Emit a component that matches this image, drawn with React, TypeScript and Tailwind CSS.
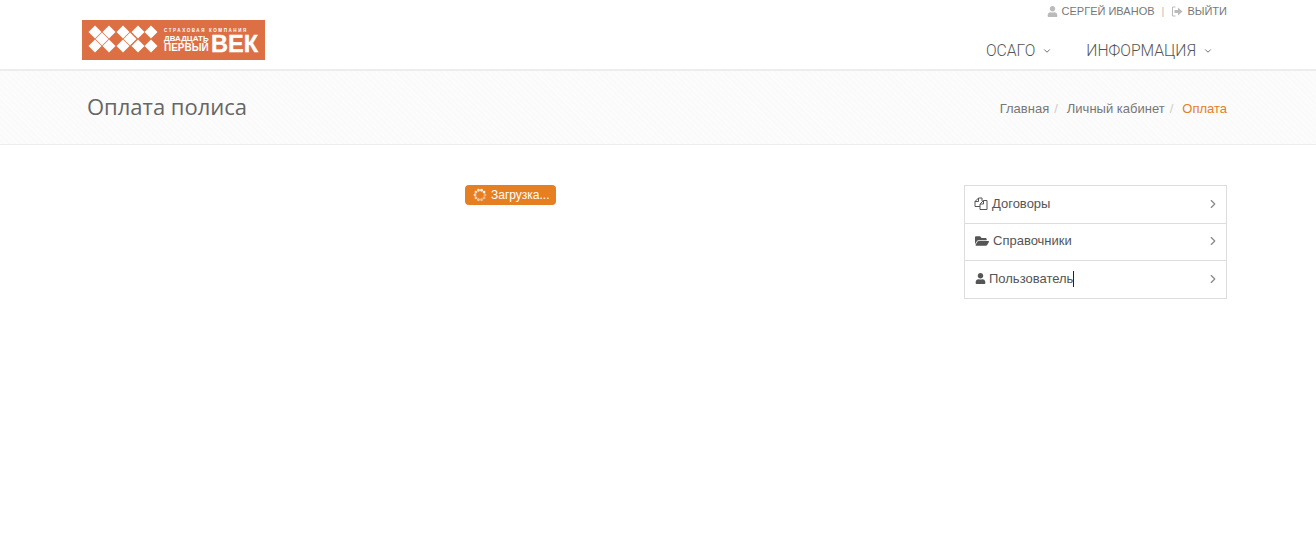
import { FaFolderOpen, FaUser } from "react-icons/fa";
import { LuChevronDown, LuChevronRight } from "react-icons/lu";

const diamonds = [
  [13, 12], [27, 12], [41, 12], [56, 12], [69, 12],
  [20, 19], [48, 19],
  [13, 26], [27, 26], [41, 26], [56, 26], [69, 26],
];

function Logo() {
  return (
    <div className="flex h-10 w-[183px] bg-[#dc6f43] text-white">
      <svg width="82" height="40" viewBox="0 0 82 40" className="shrink-0">
        {diamonds.map(([x, y]) => (
          <polygon key={`${x}-${y}`} points={`${x},${y - 6.500} ${x + 6.500},${y} ${x},${y + 6.500} ${x - 6.500},${y}`} fill="#fff" />
        ))}
      </svg>
      <div className="flex flex-col pt-[8px] font-['Liberation_Sans',sans-serif] font-bold">
        <span className="text-[4.500px] leading-[6px] tracking-[1.6px] whitespace-nowrap">СТРАХОВАЯ КОМПАНИЯ</span>
        <div className="flex items-center">
          <div className="flex w-[47px] flex-col">
            <span className="text-[8px] leading-[8px]">ДВАДЦАТЬ</span>
            <span className="text-[10px] leading-[10px]">ПЕРВЫЙ</span>
          </div>
          <span className="text-[23.500px] leading-[20px] [-webkit-text-stroke:0.4px_white]">ВЕК</span>
        </div>
      </div>
    </div>
  );
}

function Spinner() {
  const dots = [0, 1, 2, 3, 4, 5, 6, 7, 8, 9];
  return (
    <svg width="14" height="14" viewBox="0 0 14 14">
      {dots.map((i) => {
        const a = (i / dots.length) * Math.PI * 2;
        return <circle key={i} cx={7 + 5 * Math.cos(a)} cy={7 + 5 * Math.sin(a)} r={1.400} fill="#fff" opacity={0.4 + i * 0.06} />;
      })}
    </svg>
  );
}

function SignOut() {
  return (
    <svg width="12" height="11" viewBox="0 0 12 11" className="text-[#bbb]">
      <path d="M4.500 1H1.500v9h3" fill="none" stroke="currentColor" />
      <path d="M3.500 4h3.500V1.500L11.500 5.500 7 9.500V7H3.500z" fill="currentColor" />
    </svg>
  );
}

function Files() {
  return (
    <svg width="14" height="13" viewBox="0 0 14 13" fill="none" stroke="currentColor" strokeWidth="1">
      <path d="M6 9.500H1V4.500L4.500 1H8V4" />
      <path d="M1 4.500H4.500V1" />
      <path d="M6 12.500V7L9.500 3.500H13V12.500Z" />
      <path d="M6 7H9.500V3.500" />
    </svg>
  );
}

const menu = [
  { label: "Договоры", icon: <Files />, gap: "gap-[4px]", h: "h-[37px]", pl: "pl-[9px]" },
  { label: "Справочники", icon: <FaFolderOpen className="text-[14px]" />, gap: "gap-[4px]", h: "h-[37px]", pl: "pl-[10px]" },
  { label: "Пользователь", icon: <FaUser className="text-[11px]" />, gap: "gap-[3px]", h: "h-[38px]", pl: "pl-[10px]", caret: true },
];

export default function App() {
  return (
    <div className="h-[536px] w-full overflow-hidden bg-white font-['Liberation_Sans',sans-serif]">
      <header className="h-[71px] border-b-2 border-[#ededed]">
        <div className="ml-[82px] flex w-[1145px] justify-between">
          <div className="pt-5">
            <Logo />
          </div>
          <div className="flex flex-col items-end">
            <div className="flex h-[23px] items-center text-[11px] text-[#777]">
              <FaUser className="mr-[4px] text-[11px] text-[#bbb]" />
              <span>СЕРГЕЙ ИВАНОВ</span>
              <span className="mx-[7px] text-[#bbb]">|</span>
              <SignOut />
              <span className="ml-[4px]">ВЫЙТИ</span>
            </div>
            <nav className="mt-[17px] flex items-center font-['Roboto',sans-serif] text-[15.700px] leading-[22px] font-light text-[#555]">
              <span>ОСАГО</span>
              <LuChevronDown className="ml-[7px] text-[10px]" />
              <span className="ml-[34px]">ИНФОРМАЦИЯ</span>
              <LuChevronDown className="mr-[14px] ml-[7px] text-[10px]" />
            </nav>
          </div>
        </div>
      </header>
      <section className="h-[74px] border-b border-[#ededed] bg-[repeating-linear-gradient(45deg,#fcfcfc_0,#fcfcfc_2px,#fafafa_2px,#fafafa_4px)]">
        <div className="ml-[82px] flex h-full w-[1145px] items-center justify-between">
          <h1 className="pb-[3px] pl-[5px] font-['Open_Sans',sans-serif] text-[22px] leading-none text-[#666]">Оплата полиса</h1>
          <div className="flex items-center pt-[2px] text-[13px] text-[#777]">
            <span>Главная</span>
            <span className="mr-[9px] ml-[5px] text-[#ccc]">/</span>
            <span>Личный кабинет</span>
            <span className="mr-[9px] ml-[5px] text-[#ccc]">/</span>
            <span className="text-[#e67e22]">Оплата</span>
          </div>
        </div>
      </section>
      <main className="mt-10 ml-[82px] flex w-[1145px] justify-between">
        <div className="flex w-[857px] justify-center">
          <div className="flex h-5 w-[91px] items-center gap-[4px] self-start rounded bg-[#e67e22] pl-[8px] text-[12px] text-white">
            <Spinner />
            <span>Загрузка...</span>
          </div>
        </div>
        <ul className="h-[114px] w-[263px] border border-[#ddd] text-[13px] text-[#555]">
          {menu.map((item, i) => (
            <li key={item.label} className={`flex ${item.h} items-center justify-between pr-[6px] pb-[2px] ${item.pl} ${i > 0 ? "border-t border-[#ddd]" : ""}`}>
              <span className={`flex items-center ${item.gap}`}>
                {item.icon}
                <span className={item.caret ? "border-r border-[#222] leading-[16px]" : ""}>{item.label}</span>
              </span>
              <LuChevronRight className="text-[14px] text-[#888]" />
            </li>
          ))}
        </ul>
      </main>
    </div>
  );
}
